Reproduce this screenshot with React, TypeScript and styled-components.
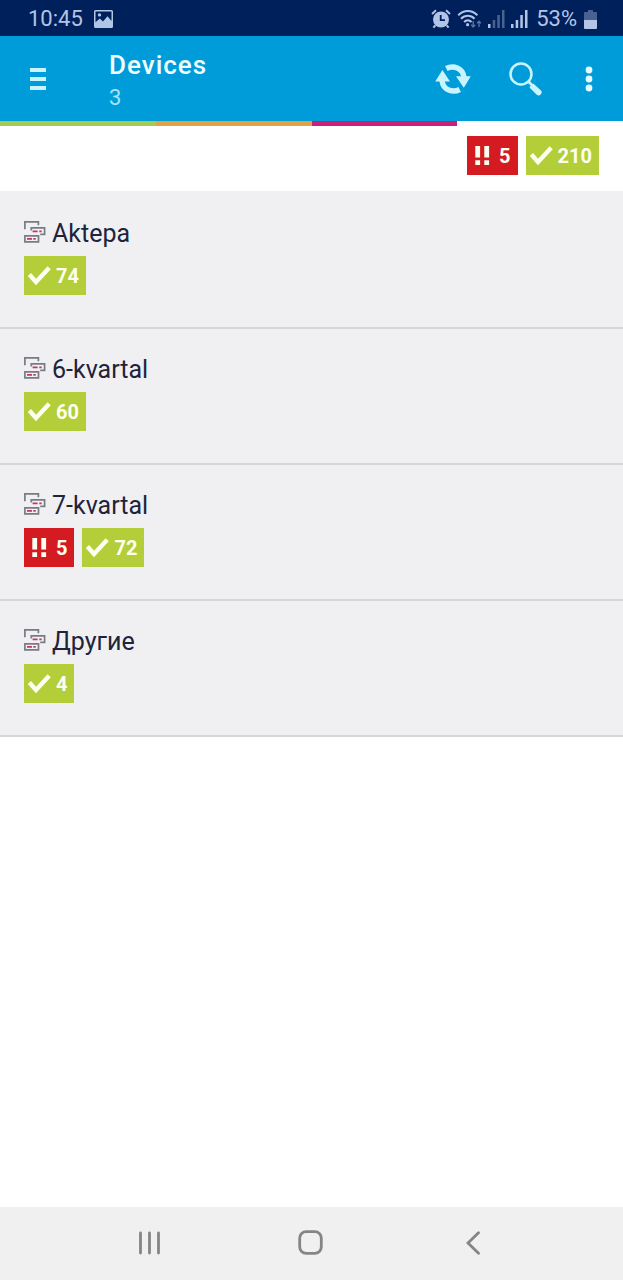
import React from "react";
import styled, { createGlobalStyle } from "styled-components";

const GlobalStyle = createGlobalStyle`
  *, *::before, *::after { box-sizing: border-box; }
  body {
    margin: 0;
    background: #ffffff;
    font-family: Roboto, "Noto Sans", sans-serif;
  }
  button { font-family: inherit; }
`;

type BadgeKind = "critical" | "ok";

interface BadgeData {
  kind: BadgeKind;
  count: number;
}

interface Group {
  name: string;
  badges: BadgeData[];
}

const totals: BadgeData[] = [
  { kind: "critical", count: 5 },
  { kind: "ok", count: 210 },
];

const groups: Group[] = [
  { name: "Aktepa", badges: [{ kind: "ok", count: 74 }] },
  { name: "6-kvartal", badges: [{ kind: "ok", count: 60 }] },
  {
    name: "7-kvartal",
    badges: [
      { kind: "critical", count: 5 },
      { kind: "ok", count: 72 },
    ],
  },
  { name: "Другие", badges: [{ kind: "ok", count: 4 }] },
];

const Screen = styled.div`
  display: flex;
  flex-direction: column;
  min-height: 100vh;
`;

const StatusBar = styled.div`
  display: flex;
  align-items: center;
  justify-content: space-between;
  height: 36px;
  padding: 2px 26px 0 28px;
  background: #00205b;
  color: #b3c5e6;
  font-size: 22px;
  line-height: 32px;
`;

const StatusGroup = styled.div<{ $gap: number }>`
  display: flex;
  align-items: center;
  gap: ${(p) => p.$gap}px;

  svg { display: block; }
`;

const Header = styled.header`
  display: flex;
  align-items: stretch;
  height: 85px;
  padding-right: 6px;
  background: #009cd9;
`;

const IconButton = styled.button<{ $width: number }>`
  display: flex;
  align-items: center;
  justify-content: center;
  width: ${(p) => p.$width}px;
  padding: 0;
  border: 0;
  background: transparent;
  color: #c9f3fd;
  cursor: pointer;
`;

const Titles = styled.div`
  flex: 1;
  padding: 13px 0 0 33px;
`;

const Title = styled.h1`
  margin: 0;
  color: #f0fdff;
  font-size: 26px;
  font-weight: 500;
  line-height: 32px;
  letter-spacing: 1px;
`;

const Subtitle = styled.p`
  margin: 0;
  color: #a5e4fa;
  font-size: 22px;
  line-height: 34px;
`;

const Stripe = styled.div`
  display: flex;
  height: 5px;
`;

const StripePart = styled.div<{ $color: string; $share: number }>`
  width: ${(p) => p.$share}%;
  background: ${(p) => p.$color};
`;

const Totals = styled.div`
  display: flex;
  justify-content: flex-end;
  gap: 8px;
  padding: 10px 24px 16px;
`;

const BadgeBox = styled.span<{ $kind: BadgeKind }>`
  display: flex;
  align-items: center;
  gap: 4px;
  height: 39px;
  padding: 0 7px 0 4px;
  background: ${(p) => (p.$kind === "critical" ? "#d41b22" : "#b3ce38")};
  color: #fdfff0;
  font-size: 20px;
  font-weight: 700;
  line-height: 24px;
`;

const GroupList = styled.ul`
  margin: 0;
  padding: 2px 0 0;
  list-style: none;
  background: #f0f0f3;
`;

const GroupRow = styled.button`
  display: flex;
  flex-direction: column;
  gap: 5px;
  width: 100%;
  padding: 24px 24px 32px;
  border: 0;
  border-bottom: 2px solid #d6d6d9;
  background: transparent;
  text-align: left;
  cursor: pointer;
`;

const GroupName = styled.span`
  display: flex;
  align-items: flex-start;
  gap: 6px;
  color: #20243a;
  font-size: 25px;
  line-height: 34px;

  svg { margin-top: 4px; }
`;

const BadgeRow = styled.span`
  display: flex;
  gap: 8px;
`;

const NavBar = styled.nav`
  display: grid;
  grid-template-columns: repeat(3, 1fr);
  margin-top: auto;
  height: 73px;
  padding: 0 11% 1px;
  background: #f0f0f0;
`;

const NavButton = styled.button`
  display: flex;
  align-items: center;
  justify-content: center;
  padding: 0;
  border: 0;
  background: transparent;
  color: #858585;
  cursor: pointer;
`;

function CheckIcon() {
  return (
    <svg width="24" height="25" viewBox="0 0 24 25" fill="none" stroke="currentColor" strokeWidth="4.4" aria-hidden="true">
      <path d="M1.400 11.500L8 19 21.200 4.800" />
    </svg>
  );
}

function CriticalIcon() {
  return (
    <svg width="24" height="25" viewBox="0 0 24 25" fill="currentColor" aria-hidden="true">
      <path d="M4.300 3h4.800v11.500H4.300zM13.300 3h4.800v11.500h-4.800zM4.300 17.300h4.800V22H4.300zM13.300 17.300h4.800V22h-4.800z" />
    </svg>
  );
}

function Badge({ kind, count }: BadgeData) {
  return (
    <BadgeBox $kind={kind}>
      {kind === "critical" ? <CriticalIcon /> : <CheckIcon />}
      {count}
    </BadgeBox>
  );
}

function DevicesIcon() {
  return (
    <svg width="22" height="22" viewBox="0 0 22 22" fill="none" aria-hidden="true">
      <g stroke="#777c84" strokeWidth="1.7">
        <path d="M.9 8.200V.9h13.500v3.400" />
        <path d="M7.300 9.600V6.900h13.300v6.500h-4.400" />
        <path d="M.9 14.900h13.600v5.900H.9z" />
      </g>
      <path d="M8.600 10.300h5M15.300 10.300h2.400M3 17.800h5M9.300 17.800h2.400" stroke="#c23763" strokeWidth="1.700" />
    </svg>
  );
}

function PictureIcon() {
  return (
    <svg width="19" height="18" viewBox="0 0 19 18" aria-hidden="true">
      <path
        fill="currentColor"
        fillRule="evenodd"
        d="M1.500 0h16A1.500 1.500 0 0 1 19 1.500v15a1.500 1.500 0 0 1-1.500 1.500h-16A1.500 1.500 0 0 1 0 16.500v-15A1.500 1.500 0 0 1 1.500 0zM1.500 1.500v10.700l4.300-3.800 3.200 3.200 4.500-5.300 4 4.600V1.500z"
      />
      <circle cx="5.500" cy="4.900" r="1.700" fill="currentColor" />
    </svg>
  );
}

function AlarmIcon() {
  return (
    <svg width="20" height="20" viewBox="0 0 20 20" aria-hidden="true">
      <circle cx="10" cy="10.500" r="8" fill="currentColor" />
      <path d="M1 5l4-3.700M19 5l-4-3.700M4.300 16.300l-1.900 2.400M15.700 16.300l1.900 2.400" stroke="currentColor" strokeWidth="2" />
      <path d="M9.700 6v5.200h4.300" fill="none" stroke="#00205b" strokeWidth="1.800" />
    </svg>
  );
}

function WifiIcon() {
  return (
    <svg width="25" height="20" viewBox="0 0 25 20" fill="none" stroke="currentColor" aria-hidden="true">
      <path d="M1.200 6.200C7 .6 14.600.6 20.400 6.200M4 9.700c4-4 9.600-4 13.600 0M7.100 13c2.200-2.200 5.200-2.200 7.400 0" strokeWidth="2" />
      <circle cx="10.600" cy="15.700" r="1.600" fill="currentColor" stroke="none" />
      <path d="M16.200 12v5.800M14.200 15.800l2 2.200 2-2.200M22 18v-5.600M20 14.400l2-2.200 2 2.200" strokeWidth="1.400" opacity=".5" />
    </svg>
  );
}

function SignalIcon({ dim }: { dim?: boolean }) {
  return (
    <svg width="17" height="18" viewBox="0 0 17 18" fill="currentColor" aria-hidden="true">
      <rect x="0" y="14" width="2.500" height="4" />
      <g opacity={dim ? 0.4 : 1}>
        <rect x="4.700" y="10" width="2.500" height="8" />
        <rect x="9.300" y="5" width="2.500" height="13" />
        <rect x="14" y="0" width="2.500" height="18" />
      </g>
    </svg>
  );
}

function BatteryIcon() {
  return (
    <svg width="13" height="19" viewBox="0 0 13 19" fill="currentColor" aria-hidden="true">
      <path d="M4 0h5v2h3a1 1 0 0 1 1 1v7H0V3a1 1 0 0 1 1-1h3z" opacity=".4" />
      <path d="M0 10h13v8a1 1 0 0 1-1 1H1a1 1 0 0 1-1-1z" />
    </svg>
  );
}

function MenuIcon() {
  return (
    <svg width="16" height="22" viewBox="0 0 16 22" fill="currentColor" aria-hidden="true">
      <path d="M0 0h16v4H0zM0 9h16v4H0zM0 18h16v4H0z" />
    </svg>
  );
}

function RefreshIcon() {
  return (
    <svg width="36" height="30" viewBox="0 0 36 30" aria-hidden="true">
      <g fill="none" stroke="currentColor" strokeWidth="5.400">
        <path d="M11.300 4.500C18 1 28 3.600 29 13.500" />
        <path d="M24.700 25.500C18 29 8 26.400 7 16.500" />
      </g>
      <path d="M21 12.200h14.800l-7 11.500zM.2 17.600H15L7.400 6z" fill="currentColor" />
    </svg>
  );
}

function SearchIcon() {
  return (
    <svg width="34" height="34" viewBox="0 0 34 34" fill="none" stroke="currentColor" aria-hidden="true">
      <circle cx="13" cy="12" r="10.500" strokeWidth="2.500" />
      <path d="M20.400 19.400l4 4" strokeWidth="2.800" />
      <path d="M22.700 25.200l2.500-2.500 6.800 6.200a1.800 1.800 0 0 1-2.800 2.800z" fill="currentColor" strokeWidth="2" strokeLinejoin="round" />
    </svg>
  );
}

function MoreIcon() {
  return (
    <svg width="8" height="26" viewBox="0 0 8 26" fill="#e6fbff" aria-hidden="true">
      <circle cx="4" cy="4" r="3.400" />
      <circle cx="4" cy="13" r="3.400" />
      <circle cx="4" cy="22" r="3.400" />
    </svg>
  );
}

export default function App() {
  return (
    <Screen>
      <GlobalStyle />
      <StatusBar>
        <StatusGroup $gap={11}>
          <span>10:45</span>
          <PictureIcon />
        </StatusGroup>
        <StatusGroup $gap={8}>
          <StatusGroup $gap={6}>
            <AlarmIcon />
            <WifiIcon />
            <SignalIcon dim />
            <SignalIcon />
          </StatusGroup>
          <StatusGroup $gap={7}>
            <span>53%</span>
            <BatteryIcon />
          </StatusGroup>
        </StatusGroup>
      </StatusBar>

      <Header>
        <IconButton $width={76} aria-label="Menu">
          <MenuIcon />
        </IconButton>
        <Titles>
          <Title>Devices</Title>
          <Subtitle>3</Subtitle>
        </Titles>
        <IconButton $width={72} aria-label="Refresh">
          <RefreshIcon />
        </IconButton>
        <IconButton $width={72} aria-label="Search">
          <SearchIcon />
        </IconButton>
        <IconButton $width={56} aria-label="More options">
          <MoreIcon />
        </IconButton>
      </Header>

      <Stripe>
        <StripePart $color="#a5cb52" $share={25} />
        <StripePart $color="#dfa245" $share={25} />
        <StripePart $color="#c9207c" $share={23.4} />
      </Stripe>

      <main>
        <Totals>
          {totals.map((badge) => (
            <Badge key={badge.kind} {...badge} />
          ))}
        </Totals>
        <GroupList>
          {groups.map((group) => (
            <li key={group.name}>
              <GroupRow>
                <GroupName>
                  <DevicesIcon />
                  {group.name}
                </GroupName>
                <BadgeRow>
                  {group.badges.map((badge) => (
                    <Badge key={badge.kind} {...badge} />
                  ))}
                </BadgeRow>
              </GroupRow>
            </li>
          ))}
        </GroupList>
      </main>

      <NavBar>
        <NavButton aria-label="Recent apps">
          <svg width="22" height="24" viewBox="0 0 22 24" stroke="currentColor" strokeWidth="2.800" strokeLinecap="round" aria-hidden="true">
            <path d="M1.500 2v20M10.500 2v20M19.500 2v20" />
          </svg>
        </NavButton>
        <NavButton aria-label="Home">
          <svg width="26" height="26" viewBox="0 0 26 26" fill="none" stroke="currentColor" strokeWidth="2.800" aria-hidden="true">
            <rect x="1.700" y="1.700" width="21.600" height="21.600" rx="6.500" />
          </svg>
        </NavButton>
        <NavButton aria-label="Back">
          <svg width="14" height="24" viewBox="0 0 14 24" fill="none" stroke="currentColor" strokeWidth="2.800" strokeLinecap="round" aria-hidden="true">
            <path d="M12.500 1.800L2 12l10.500 10.200" />
          </svg>
        </NavButton>
      </NavBar>
    </Screen>
  );
}
